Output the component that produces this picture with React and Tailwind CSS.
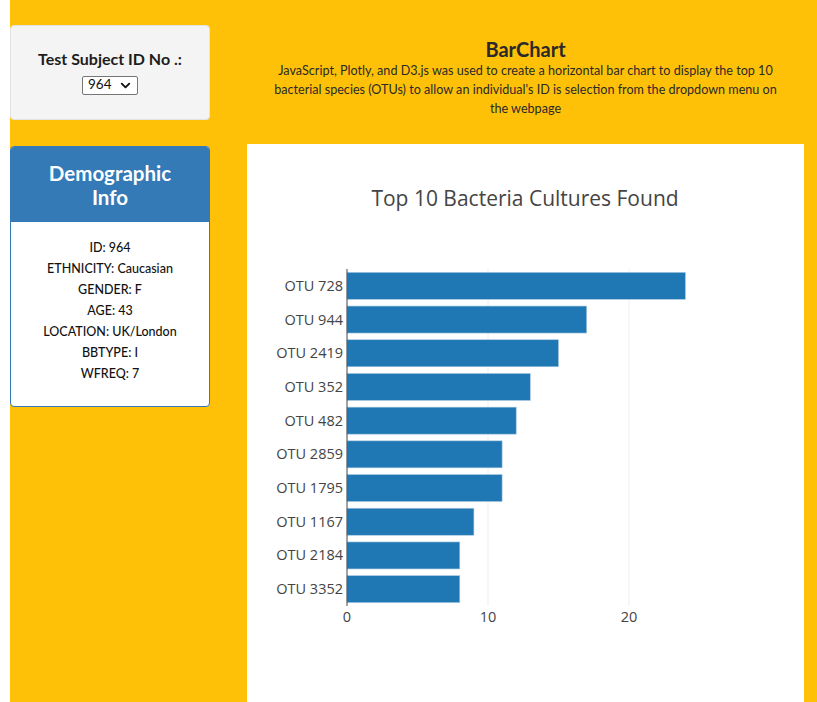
import { ChevronDown } from "lucide-react";

const otus = [
  { label: "OTU 728", value: 24 },
  { label: "OTU 944", value: 17 },
  { label: "OTU 2419", value: 15 },
  { label: "OTU 352", value: 13 },
  { label: "OTU 482", value: 12 },
  { label: "OTU 2859", value: 11 },
  { label: "OTU 1795", value: 11 },
  { label: "OTU 1167", value: 9 },
  { label: "OTU 2184", value: 8 },
  { label: "OTU 3352", value: 8 },
];

const demo = [
  "ID: 964",
  "ETHNICITY: Caucasian",
  "GENDER: F",
  "AGE: 43",
  "LOCATION: UK/London",
  "BBTYPE: I",
  "WFREQ: 7",
];

function BarChart() {
  const x0 = 100;
  const unit = 14.1;
  const top = 125;
  const pitch = 33.7;
  const barH = 27;
  const bottom = top + pitch * otus.length;

  return (
    <svg width="557" height="558" className="block" style={{ fontFamily: '"Open Sans", sans-serif' }}>
      <text x="278" y="62" textAnchor="middle" fontSize="21" fill="#444">
        Top 10 Bacteria Cultures Found
      </text>
      {[10, 20].map((t) => (
        <line key={t} x1={x0 + t * unit} x2={x0 + t * unit} y1={top} y2={bottom} stroke="#eee" strokeWidth="1" />
      ))}
      {otus.map((o, i) => {
        const y = top + i * pitch + (pitch - barH) / 2;
        return (
          <g key={o.label}>
            <rect x={x0} y={y} width={o.value * unit} height={barH} fill="#1f77b4" stroke="#a9c8e2" strokeWidth="0.6" />
            <text x={x0 - 4} y={y + barH / 2 + 5} textAnchor="end" fontSize="14.5" fill="#444">
              {o.label}
            </text>
          </g>
        );
      })}
      <line x1={x0} x2={x0} y1={top} y2={bottom} stroke="#444" strokeWidth="1" />
      {[0, 10, 20].map((t) => (
        <text key={t} x={x0 + t * unit} y={bottom + 16} textAnchor="middle" fontSize="14.5" fill="#444">
          {t}
        </text>
      ))}
    </svg>
  );
}

export default function App() {
  return (
    <div className="bg-white pl-[10px] min-h-[702px] flex" style={{ fontFamily: '"Lato", "Open Sans", sans-serif' }}>
      <div className="flex-1 bg-[#ffc107] flex gap-[37px] text-[#222]">
        {/* Left column */}
        <div className="w-[200px] pt-[25px] flex flex-col gap-[26px]">
          <div className="h-[95px] bg-[#f4f4f4] border border-[#e3e3e3] rounded-[4px] flex flex-col items-center justify-center pb-[2px]">
            <h5 className="font-bold text-[16px] leading-[20px] text-[#1d1d1d]">Test Subject ID No .:</h5>
            <div className="mt-[7px] w-[56px] h-[19px] border border-[#767676] rounded-[2px] bg-white flex items-center justify-between pl-[5px] pr-[4px]">
              <span className="text-[13.5px] leading-none text-[#111]">964</span>
              <ChevronDown size={15} strokeWidth={3} className="text-[#111]" />
            </div>
          </div>

          <div className="h-[261px] bg-white border border-[#337ab7] rounded-[4px] overflow-hidden flex flex-col">
            <div className="h-[75px] bg-[#337ab7] flex items-center justify-center">
              <h3 className="text-white font-bold text-[20.5px] leading-[24px] text-center">
                Demographic
                <br />
                Info
              </h3>
            </div>
            <div className="pt-[15px] flex flex-col items-center">
              {demo.map((d) => (
                <p key={d} className="text-[12.5px] leading-[21px] font-medium text-[#111]">
                  {d}
                </p>
              ))}
            </div>
          </div>
        </div>

        {/* Right column */}
        <div className="w-[557px] flex flex-col">
          <div className="pt-[37px] text-center">
            <h3 className="font-bold text-[20px] leading-[24px] text-[#2a2a2a]">BarChart</h3>
            <p className="text-[12.6px] leading-[19px] text-[#2a2a2a] whitespace-nowrap">
              JavaScript, Plotly, and D3.js was used to create a horizontal bar chart to display the top 10
              <br />
              bacterial species (OTUs) to allow an individual's ID is selection from the dropdown menu on
              <br />
              the webpage
            </p>
          </div>
          <div className="mt-[26px] bg-white flex-1">
            <BarChart />
          </div>
        </div>
      </div>
    </div>
  );
}
